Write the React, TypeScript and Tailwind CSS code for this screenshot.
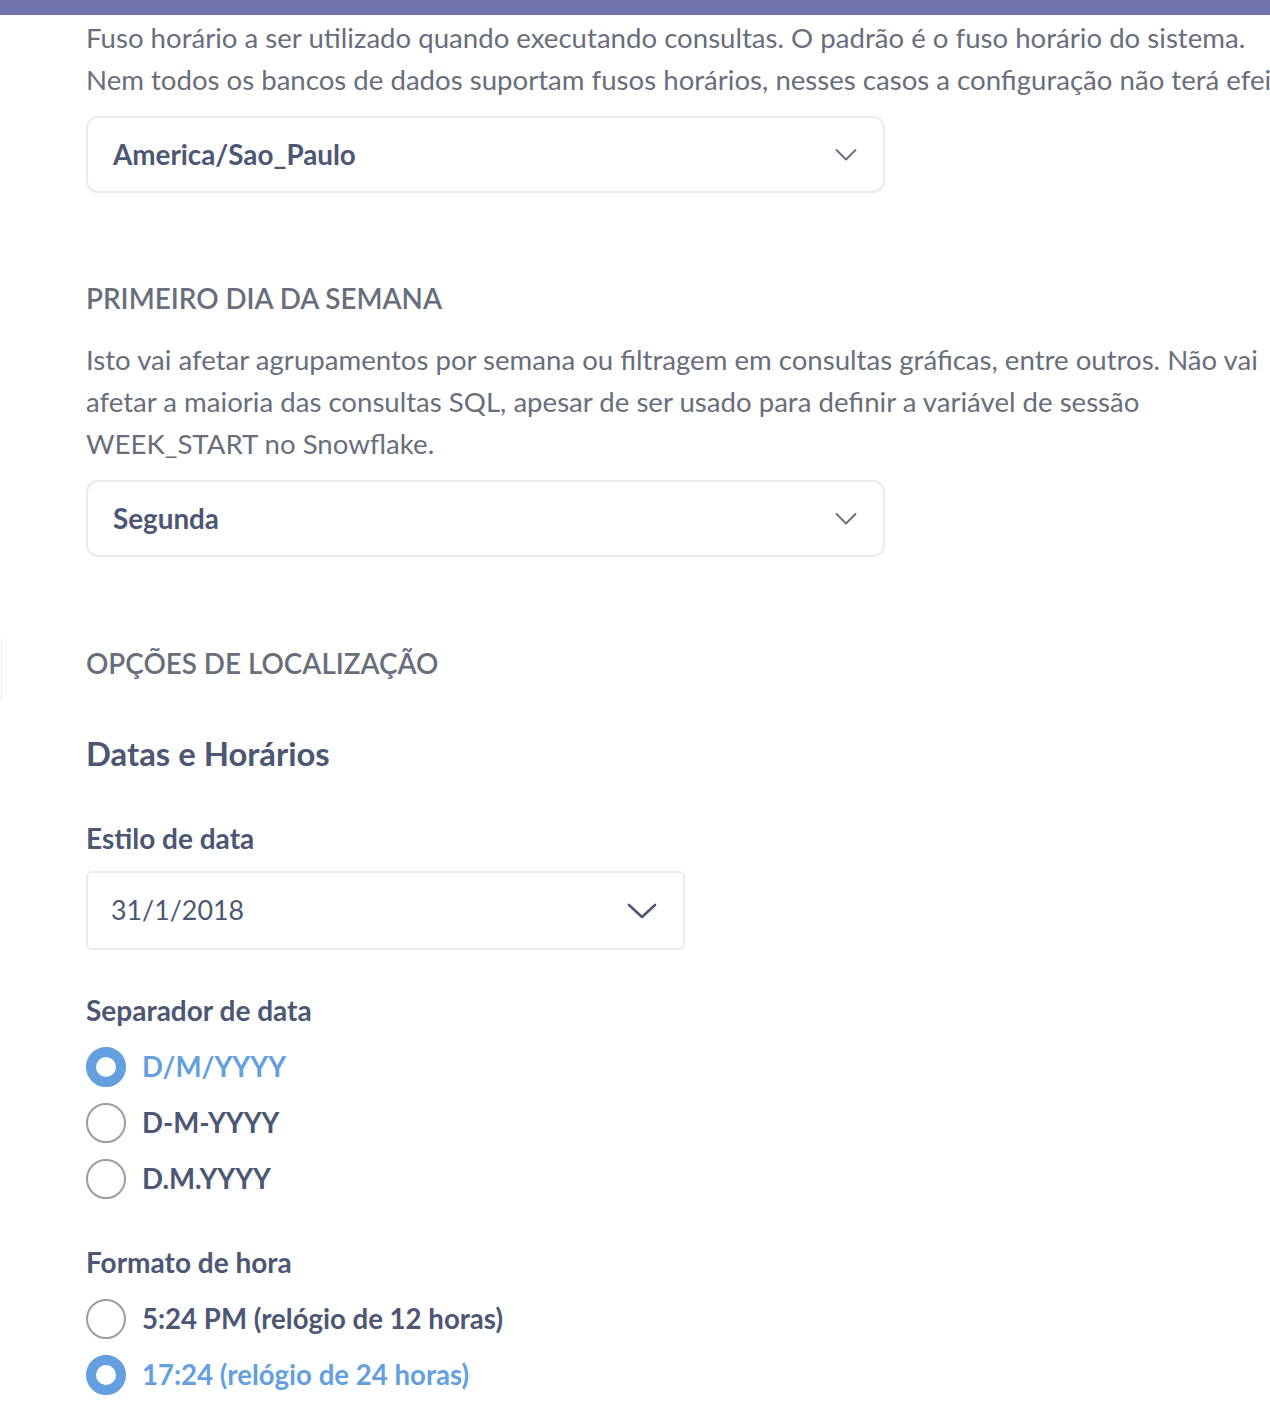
import React from "react";

const Chevron = ({ big }: { big?: boolean }) =>
  big ? (
    <svg width="30" height="18" viewBox="0 0 30 18" fill="none">
      <path d="M2 3 L15 15 L28 3" stroke="#4C5773" strokeWidth="2.6" strokeLinecap="round" strokeLinejoin="round" />
    </svg>
  ) : (
    <svg width="22" height="14" viewBox="0 0 22 14" fill="none">
      <path d="M1.5 2 L11 11.5 L20.5 2" stroke="#6b7080" strokeWidth="2" strokeLinecap="round" strokeLinejoin="round" />
    </svg>
  );

const Radio = ({ checked, label }: { checked?: boolean; label: string }) => (
  <div className="flex items-center h-[56px]">
    {checked ? (
      <div className="w-[40px] h-[40px] rounded-full border-[10px] border-[#649fe0] bg-white" />
    ) : (
      <div className="w-[40px] h-[40px] rounded-full border-2 border-[#9a9ca6] bg-white" />
    )}
    <span className={`ml-[16px] text-[27.6px] font-bold ${checked ? "text-[#649fe0]" : "text-[#4C5773]"}`}>{label}</span>
  </div>
);

export default function App() {
  return (
    <div className="relative w-[1270px] h-[1428px] overflow-hidden bg-white" style={{ fontFamily: "Lato, 'Noto Sans', sans-serif" }}>
      <div className="h-[15px] bg-[#7172ad]" />
      <div className="absolute left-[-20px] top-[636px] w-[22px] h-[66px] rounded-[6px] border border-[#ececec] bg-white" />
      <div className="pl-[86px] pt-[2px]">
        <p className="text-[27.6px] leading-[42px] text-[#696e7b] whitespace-nowrap">
          Fuso horário a ser utilizado quando executando consultas. O padrão é o fuso horário do sistema.
          <br />
          Nem todos os bancos de dados suportam fusos horários, nesses casos a configuração não terá efeito.
        </p>
        <div className="mt-[15px] w-[799px] h-[77px] rounded-[12px] border-2 border-[#ebebeb] flex items-center justify-between pl-[25px] pr-[26px]">
          <span className="text-[27.8px] font-bold text-[#4C5773]">America/Sao_Paulo</span>
          <Chevron />
        </div>

        <h3 className="mt-[90px] text-[27.8px] leading-[32px] font-semibold text-[#696e7b] uppercase">Primeiro dia da semana</h3>
        <p className="mt-[24px] text-[27.6px] leading-[42px] text-[#696e7b] whitespace-nowrap">
          Isto vai afetar agrupamentos por semana ou filtragem em consultas gráficas, entre outros. Não vai
          <br />
          afetar a maioria das consultas SQL, apesar de ser usado para definir a variável de sessão
          <br />
          WEEK_START no Snowflake.
        </p>
        <div className="mt-[15px] w-[799px] h-[77px] rounded-[12px] border-2 border-[#ebebeb] flex items-center justify-between pl-[25px] pr-[26px]">
          <span className="text-[27.8px] font-bold text-[#4C5773]">Segunda</span>
          <Chevron />
        </div>

        <h3 className="mt-[91px] text-[27.8px] leading-[32px] font-semibold text-[#696e7b] uppercase">Opções de localização</h3>

        <h2 className="mt-[54px] text-[32.8px] leading-[40px] font-bold text-[#4C5773]">Datas e Horários</h2>

        <h4 className="mt-[48px] text-[28px] leading-[32px] font-bold text-[#4C5773]">Estilo de data</h4>
        <div className="mt-[17px] w-[599px] h-[79px] rounded-[6px] border-2 border-[#ebebeb] flex items-center justify-between pl-[23px] pr-[26px]">
          <span className="text-[26.8px] text-[#4C5773]">31/1/2018</span>
          <Chevron big />
        </div>

        <h4 className="mt-[44px] text-[28px] leading-[32px] font-bold text-[#4C5773]">Separador de data</h4>
        <div className="mt-[13px] flex flex-col">
          <Radio checked label="D/M/YYYY" />
          <Radio label="D-M-YYYY" />
          <Radio label="D.M.YYYY" />
        </div>

        <h4 className="mt-[39px] text-[28px] leading-[32px] font-bold text-[#4C5773]">Formato de hora</h4>
        <div className="mt-[13px] flex flex-col">
          <Radio label="5:24 PM (relógio de 12 horas)" />
          <Radio checked label="17:24 (relógio de 24 horas)" />
        </div>
      </div>
    </div>
  );
}
